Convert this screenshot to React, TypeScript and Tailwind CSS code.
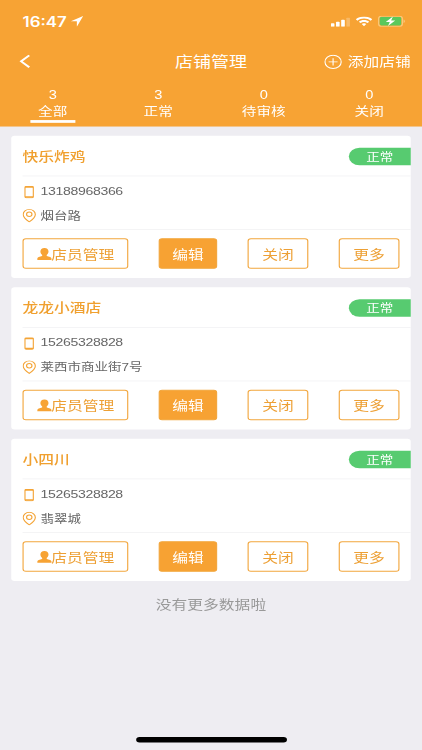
import clsx from "clsx";

const tabs = [
  { count: 3, label: "全部" },
  { count: 3, label: "正常" },
  { count: 0, label: "待审核" },
  { count: 0, label: "关闭" },
];

const shops = [
  { name: "快乐炸鸡", phone: "13188968366", address: "烟台路" },
  { name: "龙龙小酒店", phone: "15265328828", address: "莱西市商业街7号" },
  { name: "小四川", phone: "15265328828", address: "翡翠城" },
];

function StatusBar() {
  return (
    <div className="flex h-[46px] items-center pl-5 pr-[15px] text-white">
      <span className="font-['Inter',sans-serif] text-[15px] font-semibold leading-none">
        16:47
      </span>
      <svg className="ml-[4px] h-3 w-[11px]" viewBox="0 0 11 12" fill="currentColor">
        <path d="M10.9 0.2 0 6H5.3V12Z" />
      </svg>
      <svg className="ml-auto mt-px h-[10px] w-[17px]" viewBox="0 0 17 10" fill="currentColor">
        <rect x="0" y="6.2" width="3.2" height="3.8" rx="0.7" />
        <rect x="4.6" y="4.6" width="3.2" height="5.4" rx="0.7" />
        <rect x="9.2" y="2.4" width="3.2" height="7.6" rx="0.7" />
        <rect x="13.8" y="0" width="3.2" height="10" rx="0.7" opacity="0.25" />
      </svg>
      <svg className="ml-[5px] h-[11px] w-[15px]" viewBox="0 0 15 11" fill="currentColor">
        <path d="M7.5 0C4.7 0 2.1 1.1.2 2.9l1.4 1.5C3.2 2.9 5.2 2.1 7.5 2.1s4.3.8 5.9 2.3l1.4-1.5C12.9 1.1 10.3 0 7.5 0Z" />
        <path d="M7.5 3.6c-1.8 0-3.4.7-4.6 1.9l1.4 1.5c.8-.8 2-1.3 3.2-1.3s2.4.5 3.2 1.3l1.4-1.5C10.9 4.3 9.3 3.6 7.5 3.6Z" />
        <path d="M7.5 7.2c-.8 0-1.5.3-2 .8l2 2.5 2-2.5c-.5-.5-1.2-.8-2-.8Z" />
      </svg>
      <svg className="ml-[5px] h-3 w-6" viewBox="0 0 24 12">
        <rect x="0.5" y="0.5" width="21" height="11" rx="2.6" fill="none" stroke="#fbd08a" />
        <rect x="1.5" y="1.5" width="19" height="9" rx="1.6" fill="#5ac85c" />
        <path d="M22.7 4.2v3.6c.6-.3 1-1 1-1.8s-.4-1.5-1-1.8Z" fill="#fbd08a" />
        <path d="M13.2 0.8 6.8 6.7H10.4L8.8 11.2 15.2 5.3H11.6Z" fill="#fff" />
      </svg>
    </div>
  );
}

function PhoneIcon() {
  return (
    <svg className="h-[14px] w-3" viewBox="0 0 12 14" fill="none" stroke="#f4a436">
      <rect x="2.2" y="0.9" width="7.4" height="12.2" rx="1" />
      <path d="M2.2 1.6h7.4M2.2 12.2h7.4" strokeWidth="1.5" />
    </svg>
  );
}

function PinIcon() {
  return (
    <svg className="h-[15px] w-3" viewBox="0 0 12 15" fill="none" stroke="#f4a436">
      <path d="M6 14.2C3.6 12.2.6 9.4.6 6.2a5.4 5.5 0 0 1 10.8 0C11.4 9.4 8.4 12.2 6 14.2Z" />
      <circle cx="6" cy="6" r="2.4" />
    </svg>
  );
}

function UserIcon() {
  return (
    <svg className="h-[14px] w-[13px] shrink-0" viewBox="0 0 13 14" fill="#f7a334">
      <path d="M6.5.5c2.4 0 3.6 1.6 3.6 3.9 0 1.5-.7 2.9-1.6 3.7v.8c.3.5 4.3 1.2 4.4 3.1v1.4H.1V12c.1-1.9 4.1-2.6 4.4-3.1v-.8C3.6 7.3 2.9 5.9 2.9 4.4 2.9 2.1 4.1.5 6.5.5Z" />
    </svg>
  );
}

function ShopCard({ shop }: any) {
  const btn =
    "flex h-[33px] items-center justify-center rounded-[3px] border border-[#f2a63d] text-sm leading-none text-[#eda035]";

  return (
    <div className="h-[154px] rounded-[3px] bg-white">
      {/* name and status */}
      <div className="flex h-[43px] items-center justify-between pl-[10px] pt-px">
        <h2 className="text-sm font-medium leading-none text-[#f0a02f]">{shop.name}</h2>
        <span className="flex h-[19px] w-[55px] items-center justify-center rounded-l-full bg-[#57cb70] pt-px text-xs leading-none text-white">
          正常
        </span>
      </div>

      {/* contact */}
      <div className="ml-[10px] flex h-[59px] flex-col gap-[11px] border-y border-[#f3f3f5] pt-[9px] text-xs leading-[15px] text-[#666]">
        <div className="flex h-[15px] items-center gap-[4px]">
          <PhoneIcon />
          <span className="text-[12.5px] tracking-[-0.3px]">{shop.phone}</span>
        </div>
        <div className="flex h-[15px] items-center gap-[4px]">
          <PinIcon />
          <span className="pt-px">{shop.address}</span>
        </div>
      </div>

      <div className="flex justify-between px-[10px] pt-[9px]">
        <button className={clsx(btn, "w-[94px]")}>
          <UserIcon />
          店员管理
        </button>
        <button className={clsx(btn, "w-[52px] bg-[#f7a233] !text-white")}>编辑</button>
        <button className={clsx(btn, "w-[54px]")}>关闭</button>
        <button className={clsx(btn, "w-[54px]")}>更多</button>
      </div>
    </div>
  );
}

export default function App() {
  return (
    <div className="h-[750px] w-[422px] overflow-hidden bg-[#eeedf2]">
      {/* 375x812 phone canvas stretched to the viewport */}
      <div className="flex h-[812px] w-[375px] origin-top-left scale-x-[1.1253] scale-y-[0.9236] flex-col font-['Liberation_Sans','Noto_Sans_CJK_SC',sans-serif]">
        <header className="h-[137px] bg-[#f7a334] text-white">
          <StatusBar />
          <div className="grid h-[41px] grid-cols-3 items-center pl-[17px] pr-[10px]">
            <svg className="mb-px h-[15px] w-[10px]" viewBox="0 0 10 15" fill="none" stroke="#fff" strokeWidth="2">
              <path d="M9 1 1.8 7.4 9 13.8" />
            </svg>
            <h1 className="justify-self-center whitespace-nowrap pr-[7px] pt-[2px] text-base leading-none">店铺管理</h1>
            <div className="flex items-center gap-[5px] justify-self-end whitespace-nowrap text-sm leading-none">
              <svg className="h-4 w-4" viewBox="0 0 16 16" fill="none" stroke="#fff">
                <circle cx="8" cy="8" r="7.2" />
                <path d="M8 4v8M4 8h8" />
              </svg>
              添加店铺
            </div>
          </div>
          <nav className="grid grid-cols-4 pt-[7px]">
            {tabs.map((tab, i) => (
              <div key={tab.label} className="flex flex-col items-center text-[13px] leading-[18px]">
                <span>{tab.count}</span>
                <span className="h-[17px] whitespace-nowrap pt-px">{tab.label}</span>
                <i className={clsx("mt-px h-[3px] w-10", i === 0 && "bg-white")} />
              </div>
            ))}
          </nav>
        </header>

        <main className="flex flex-col gap-[10px] px-[10px] pt-[10px]">
          {shops.map((shop) => (
            <ShopCard key={shop.name} shop={shop} />
          ))}
        </main>
        <p className="mt-[15px] text-center text-sm text-[#999]">没有更多数据啦</p>

        <div className="mx-auto mb-[8px] mt-auto h-[6px] w-[134px] rounded-full bg-black" />
      </div>
    </div>
  );
}
